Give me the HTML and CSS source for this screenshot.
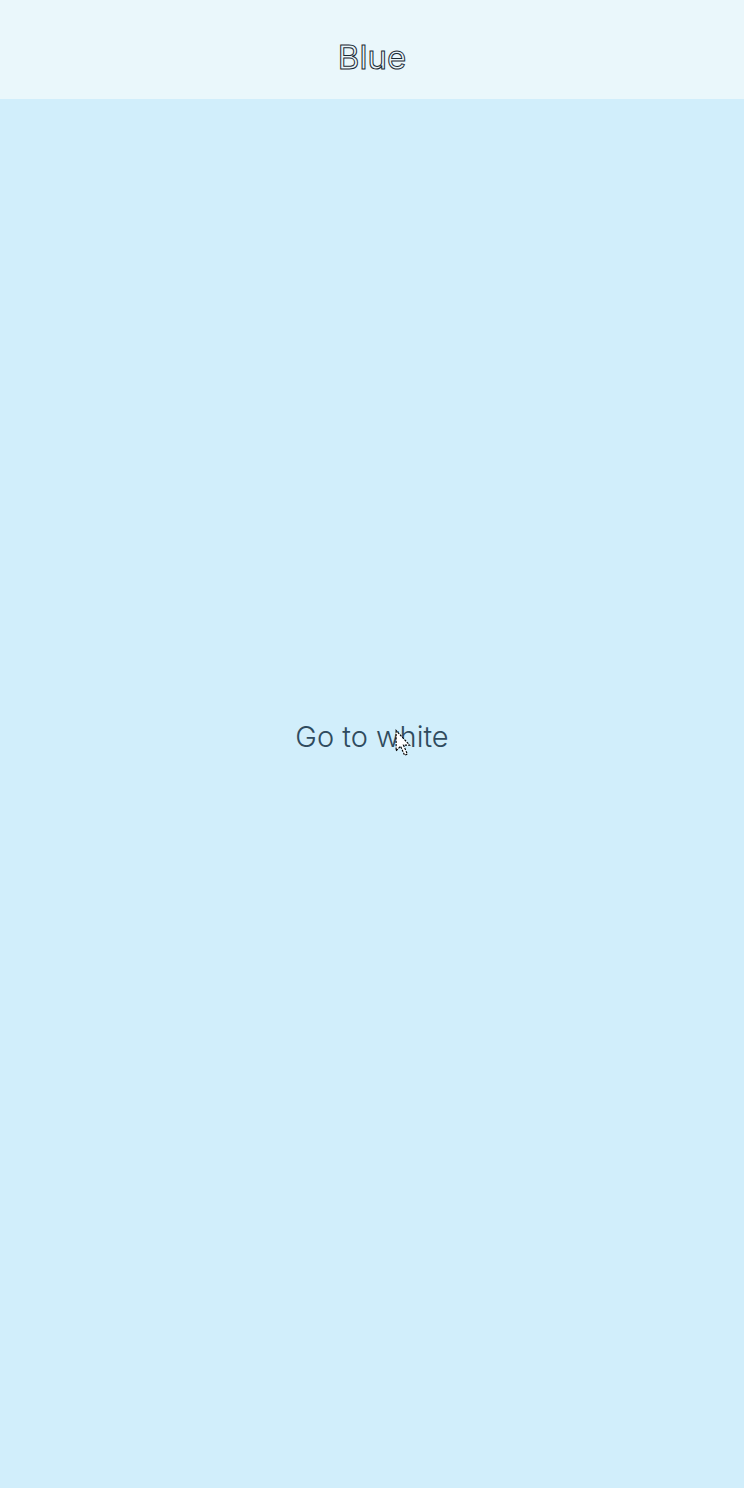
FILE: index.html
```html
<!DOCTYPE html>
<html>
<head>
<meta charset="utf-8">
<link rel="stylesheet" href="styles.css">
</head>
<body>
<div class="app">
  <header class="bar"><h1 class="title">Blue</h1></header>
  <main class="content">
    <button class="link">Go to white</button>
    <svg class="cursor" width="18" height="30" viewBox="0 0 16 26"><path d="M1 1 L1 19 L5 15 L8.5 23 L11 22 L7.5 14 L13 14 Z" fill="#fff" stroke="#000" stroke-width="1" stroke-dasharray="2 1"/></svg>
  </main>
</div>
</body>
</html>
```
FILE: styles.css
```css
html, body { margin: 0; padding: 0; }
body { font-family: Inter, Roboto, sans-serif; }
.app { width: 744px; height: 1488px; display: flex; flex-direction: column; background: #d1eefb; }
.bar { height: 99px; background: #eaf7fb; display: flex; align-items: center; justify-content: center; }
.title { margin: 0; font-size: 33px; font-weight: 400; color: transparent; -webkit-text-stroke: 1px #1a2a35; position: relative; top: 7px; }
.content { flex: 1; display: flex; align-items: center; justify-content: center; position: relative; padding-bottom: 115px; }
.link { background: none; border: 0; padding: 0; font-family: Inter, Roboto, sans-serif; font-size: 29px; font-weight: 300; color: #2f4b5e; }
.cursor { position: absolute; left: 395px; top: 630px; }
```
